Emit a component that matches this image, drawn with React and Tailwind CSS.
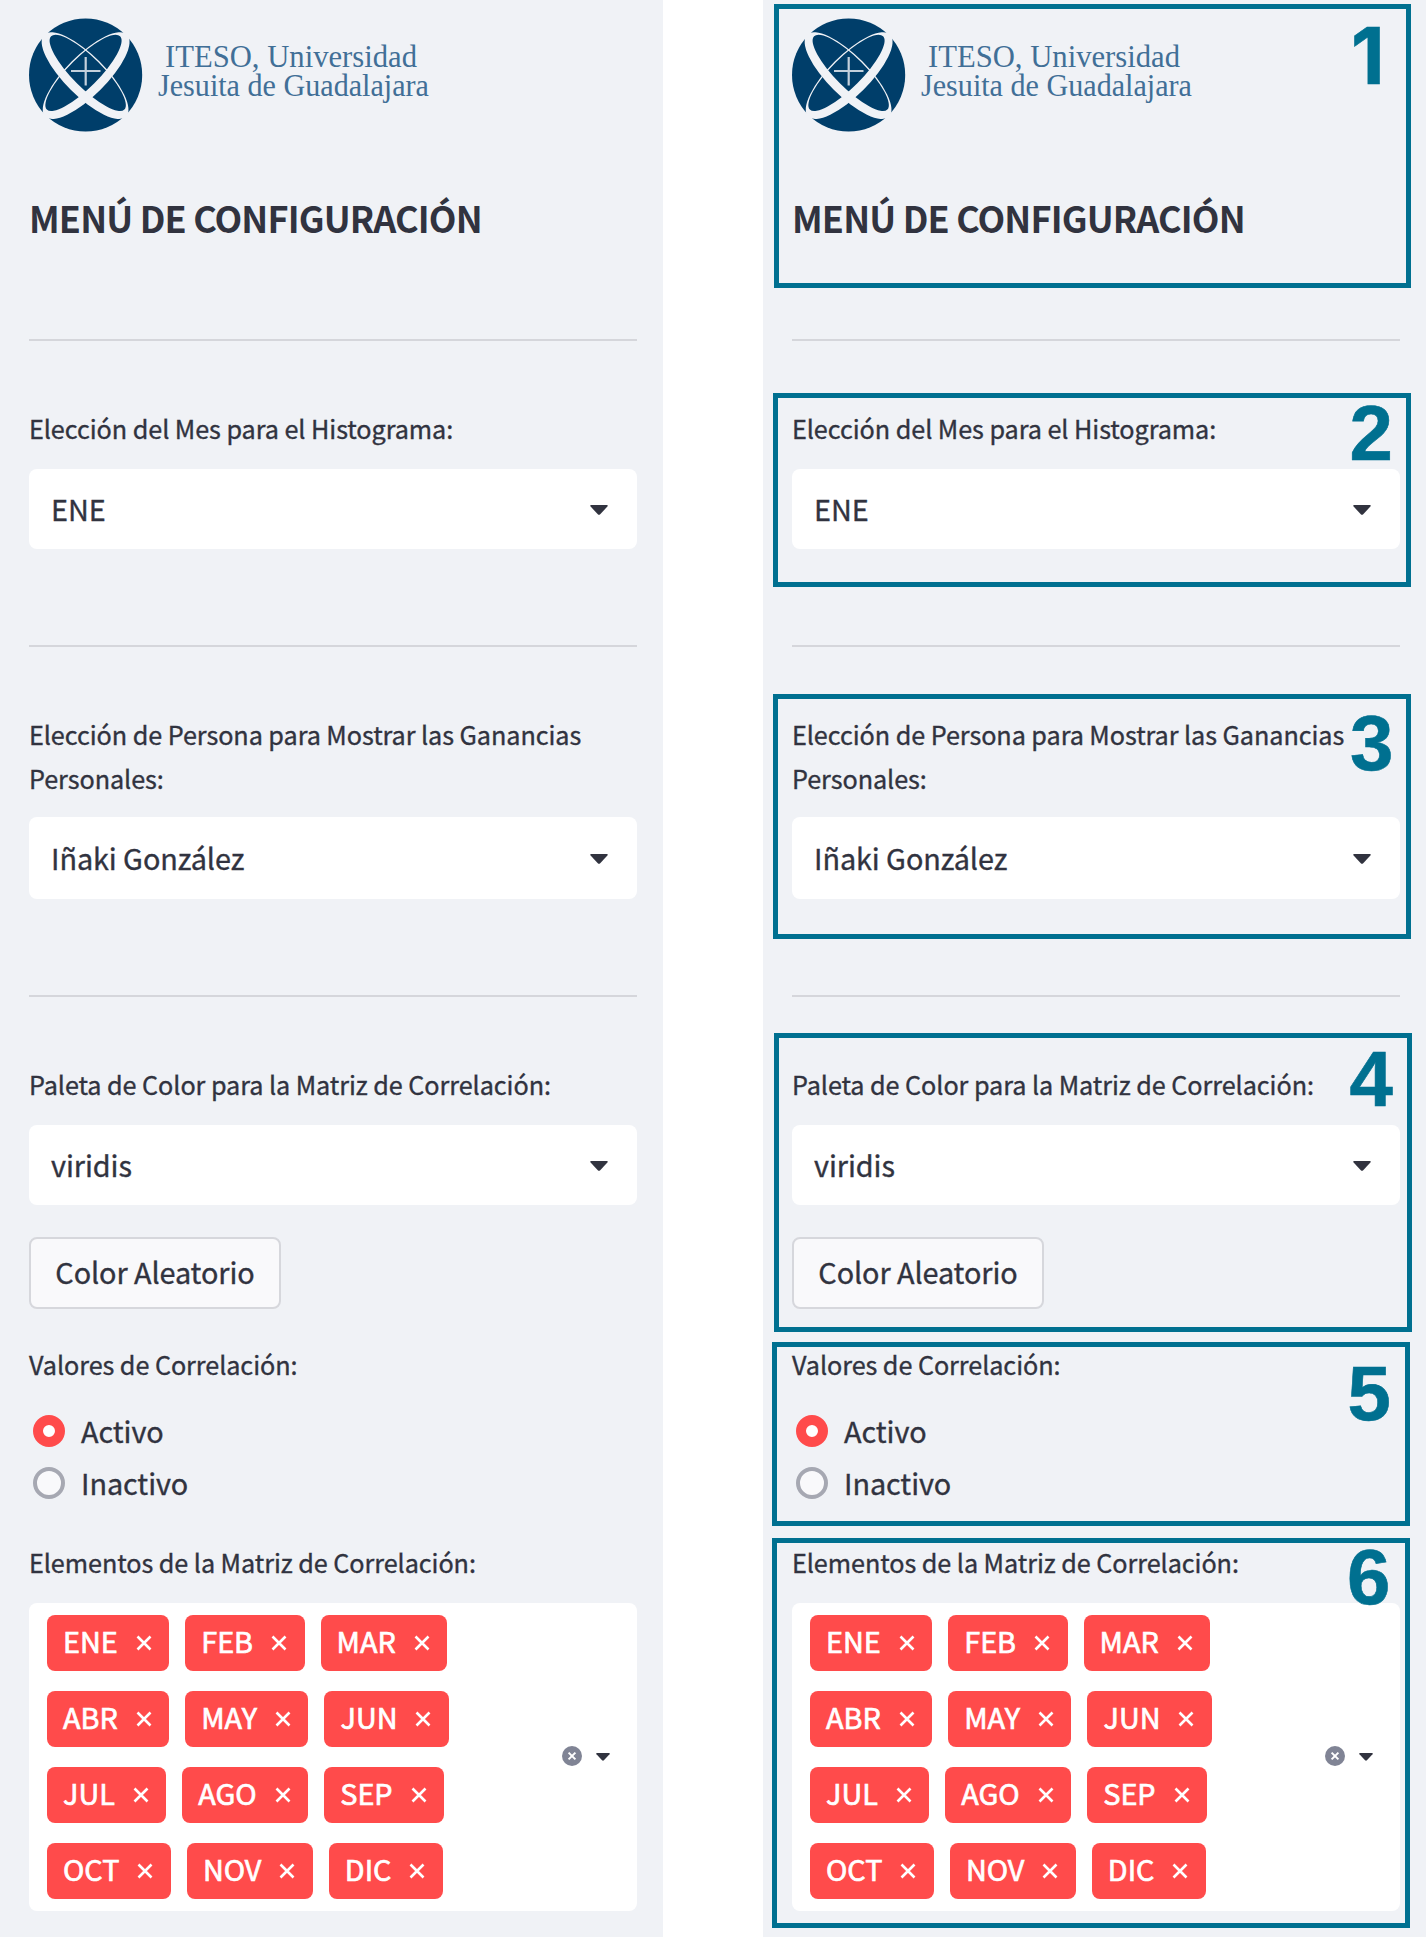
import React from "react";

const TAG_ROWS = [
  ["ENE", "FEB", "MAR"],
  ["ABR", "MAY", "JUN"],
  ["JUL", "AGO", "SEP"],
  ["OCT", "NOV", "DIC"],
];

function Logo() {
  return (
    <svg className="block h-[120px] w-[420px]" viewBox="29 18 420 120" aria-label="ITESO, Universidad Jesuita de Guadalajara">
      <circle cx="85.6" cy="75" r="56.6" fill="#003e6a" />
      {[45, -45].map((angle) => (
        <path
          key={angle}
          transform={`rotate(${angle} 85.6 75)`}
          fill="#f0f2f6"
          fillRule="evenodd"
          d="M27.6 75.8a58 20.2 0 1 0 116 0a58 20.2 0 1 0 -116 0Z M33.8 72a51.8 15 0 1 0 103.6 0a51.8 15 0 1 0 -103.6 0Z"
        />
      ))}
      <path d="M85.7 57v28.5M71 71h29.5" stroke="#c3d0dc" strokeWidth="2.2" />
      <g fill="#416f97" fontFamily="'Liberation Serif', serif" fontSize="31">
        <text x="165" y="67.2" textLength="252" lengthAdjust="spacingAndGlyphs">ITESO, Universidad</text>
        <text x="158" y="95.5" textLength="271" lengthAdjust="spacingAndGlyphs">Jesuita de Guadalajara</text>
      </g>
    </svg>
  );
}

function Caret({ small }) {
  return (
    <svg className={small ? "mt-[2px] h-[8px] w-[14px]" : "mt-[2px] h-[10px] w-[18px]"} viewBox="0 0 18 10" preserveAspectRatio="none">
      <path d="M1.2 0h15.6q1.6.2.6 1.6L10.2 9.2q-1.2 1-2.4 0L.6 1.6Q-.4.2 1.2 0Z" fill="#31333f" />
    </svg>
  );
}

function Label({ children }) {
  return <div className="text-[25.2px] leading-[44px] tracking-[-0.06px] whitespace-nowrap">{children}</div>;
}

function Select({ value, className }) {
  return (
    <div className={`flex items-center justify-between rounded-lg bg-white pr-[29px] pl-[22px] text-[28.8px] leading-[44px] tracking-[-0.06px] ${className}`}>
      <span className="mb-px">{value}</span>
      <Caret />
    </div>
  );
}

function Divider({ className }) {
  return <div className={`h-[2px] bg-[#d5d6db] ${className}`} />;
}

function Radio({ label, checked }) {
  return (
    <div className="flex h-[52px] items-center pl-1">
      <span
        className={
          checked
            ? "size-8 rounded-full border-[10px] border-[#ff4b4b] bg-white"
            : "size-8 rounded-full border-4 border-[#a6a8b2] bg-[#f9f9fb]"
        }
      />
      <span className="ml-4 text-[28.8px] leading-[44px] tracking-[-0.06px]">{label}</span>
    </div>
  );
}

function Tag({ label }) {
  return (
    <div className="flex h-14 items-center rounded-lg bg-[#ff4b4b] pr-[17.5px] pl-4 text-[28.8px] leading-[44px] text-white [-webkit-text-stroke:0.7px]">
      <span className="mb-[4px]">{label}</span>
      <svg className="ml-[18px] size-4" viewBox="0 0 16 16">
        <path d="M1.5 1.5l13 13M14.5 1.5l-13 13" stroke="#fff" strokeWidth="2.6" />
      </svg>
    </div>
  );
}

function Panel() {
  return (
    <div className="h-[1937px] w-[663px] bg-[#f0f2f6] pt-[18px] pr-[26px] pl-[29px] [-webkit-text-stroke:0.35px]">
      <Logo />
      <h1 className="mt-[57px] text-[36px] leading-[44px] font-bold tracking-[-0.85px] whitespace-nowrap [-webkit-text-stroke:0px]">
        MENÚ DE CONFIGURACIÓN
      </h1>
      <Divider className="mt-[100px]" />

      <div className="mt-[65px]">
        <Label>Elección del Mes para el Histograma:</Label>
        <Select value="ENE" className="mt-[19px] h-[80px]" />
      </div>
      <Divider className="mt-[96px]" />

      <div className="mt-[65px]">
        <Label>
          Elección de Persona para Mostrar las Ganancias
          <br />
          Personales:
        </Label>
        <Select value="Iñaki González" className="mt-[17px] h-[82px]" />
      </div>
      <Divider className="mt-[96px]" />

      <div className="mt-[65px]">
        <Label>Paleta de Color para la Matriz de Correlación:</Label>
        <Select value="viridis" className="mt-[19px] h-[80px]" />
        <button className="mt-8 flex h-[72px] w-[252px] items-center justify-center rounded-lg border-2 border-[#d6d7dc] bg-[#f9f9fb] pb-[3px] text-[28.8px] leading-[44px] tracking-[-0.08px] whitespace-nowrap">
          Color Aleatorio
        </button>
      </div>

      <div className="mt-[33px]">
        <Label>Valores de Correlación:</Label>
        <div className="mt-[19px]">
          <Radio label="Activo" checked />
          <Radio label="Inactivo" />
        </div>
      </div>

      <div className="mt-[31px]">
        <Label>Elementos de la Matriz de Correlación:</Label>
        <div className="mt-[19px] flex h-[308px] items-center justify-between rounded-lg bg-white pr-[27px] pl-[18px]">
          <div className="flex flex-col gap-5">
            {TAG_ROWS.map((row) => (
              <div key={row[0]} className="flex gap-4">
                {row.map((month) => (
                  <Tag key={month} label={month} />
                ))}
              </div>
            ))}
          </div>
          <div className="mb-[2px] flex items-center gap-[14px]">
            <svg className="size-5" viewBox="0 0 20 20">
              <circle cx="10" cy="10" r="10" fill="#808495" />
              <path d="M6.6 6.6l6.8 6.8M13.4 6.6l-6.8 6.8" stroke="#fff" strokeWidth="2" />
            </svg>
            <Caret small />
          </div>
        </div>
      </div>
    </div>
  );
}

/* Callout frames laid over the annotated copy of the panel. */
const CALLOUTS = [
  { n: "1", frame: "top-[4px] left-[11px] h-[284px] w-[637px]", num: "top-[11px] left-[588px] font-['Inter',sans-serif]" },
  { n: "2", frame: "top-[393px] left-[10px] h-[194px] w-[638px]", num: "top-[388px] left-[586.5px] font-['Liberation_Sans',sans-serif]" },
  { n: "3", frame: "top-[694px] left-[10px] h-[245px] w-[638px]", num: "top-[698px] left-[587px] font-['Liberation_Sans',sans-serif]" },
  { n: "4", frame: "top-[1033px] left-[11px] h-[299px] w-[638px]", num: "top-[1034px] left-[586.5px] font-['Liberation_Sans',sans-serif]" },
  { n: "5", frame: "top-[1342px] left-[9px] h-[184px] w-[638px]", num: "top-[1348px] left-[584.5px] font-['Liberation_Sans',sans-serif]" },
  { n: "6", frame: "top-[1538px] left-[9px] h-[390px] w-[638px]", num: "top-[1532px] left-[584px] font-['Liberation_Sans',sans-serif]" },
];

export default function App() {
  return (
    <div className="flex h-[1937px] w-[1426px] justify-between overflow-hidden bg-white font-['Noto_Sans_CJK_SC','Source_Sans_Pro',sans-serif] text-[#31333f]">
      <Panel />
      <div className="relative">
        <Panel />
        {CALLOUTS.map((c) => (
          <React.Fragment key={c.n}>
            <div className={`absolute border-[5px] border-[#007090] ${c.frame}`} />
            <div className={`absolute text-[78px] leading-[90px] font-bold text-[#007090] [-webkit-text-stroke:0.6px] ${c.num}`}>{c.n}</div>
          </React.Fragment>
        ))}
      </div>
    </div>
  );
}
